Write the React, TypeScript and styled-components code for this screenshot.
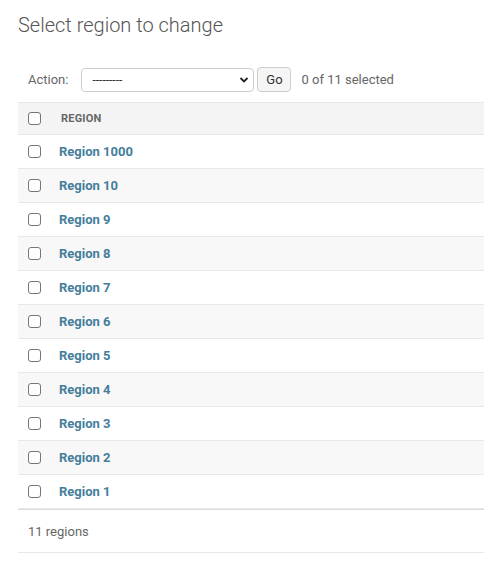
import React from 'react';
import styled, { createGlobalStyle } from 'styled-components';

const GlobalStyle = createGlobalStyle`
  body {
    margin: 0;
    background: #fff;
    font-family: Roboto, "Liberation Sans", Arial, sans-serif;
    font-size: 13px;
    color: #333;
  }
`;

const Content = styled.div`
  padding: 13px 0 0 18px;
`;

const Title = styled.h1`
  margin: 0;
  font-size: 20px;
  line-height: 24px;
  font-weight: 300;
  color: #555;
`;

const Actions = styled.div`
  display: flex;
  align-items: center;
  margin-top: 30px;
  margin-bottom: 10px;
  padding-left: 10px;
  height: 25px;
  color: #666;
`;

const ActionLabel = styled.label`
  font-size: 13px;
  margin-right: 13px;
`;

const SelectWrap = styled.div`
  position: relative;
  width: 173px;
  height: 24px;
`;

const Select = styled.select`
  appearance: none;
  width: 100%;
  height: 100%;
  box-sizing: border-box;
  border: 1px solid #ccc;
  border-radius: 4px;
  background: #fff;
  padding: 0 10px;
  font-family: inherit;
  font-size: 12px;
  color: #333;
`;

const Chevron = styled.svg`
  position: absolute;
  right: 5px;
  top: 8px;
  pointer-events: none;
`;

const GoButton = styled.button`
  margin-left: 3px;
  width: 34px;
  height: 25px;
  box-sizing: border-box;
  border: 1px solid #ccc;
  border-radius: 4px;
  background: #f5f5f5;
  font-family: inherit;
  font-size: 13px;
  color: #333;
  padding: 0;
`;

const Counter = styled.span`
  margin-left: 10px;
  font-size: 13px;
  color: #666;
`;

const Table = styled.table`
  width: 100%;
  border-collapse: collapse;
  border-top: 1px solid #e8e8e8;
`;

const HeadRow = styled.tr`
  background: #f4f4f4;
  height: 32px;
  border-bottom: 1px solid #e8e8e8;
`;

const Row = styled.tr<{ $alt: boolean }>`
  background: ${p => (p.$alt ? '#f8f8f8' : '#fff')};
  height: 34px;
  border-bottom: 1px solid #e8e8e8;
`;

const CheckCell = styled.td`
  width: 13px;
  padding: 0 18px 0 10px;
  vertical-align: middle;
`;

const HeadCheckCell = styled(CheckCell)`
  padding-bottom: 1px;
`;

const HeadCell = styled.th`
  text-align: left;
  padding: 0 0 0 2px;
  font-size: 11px;
  font-weight: 700;
  text-transform: uppercase;
  color: #666;
  letter-spacing: 0.2px;
`;

const Cell = styled.td`
  padding: 0;
  vertical-align: middle;
`;

const Box = styled.input`
  appearance: none;
  display: block;
  margin: 0;
  width: 13px;
  height: 13px;
  box-sizing: border-box;
  border: 1px solid #767676;
  border-radius: 3px;
  background: #fff;
`;

const RegionLink = styled.a`
  color: #447e9b;
  font-weight: 700;
  font-size: 13px;
  text-decoration: none;
`;

const Footer = styled.div`
  border-top: 1px solid #ddd;
  border-bottom: 1px solid #e8e8e8;
  height: 42px;
  display: flex;
  align-items: center;
  padding-left: 10px;
  color: #666;
  font-size: 13px;
`;

const regions = [1000, 10, 9, 8, 7, 6, 5, 4, 3, 2, 1];

export default function App() {
  return (
    <>
      <GlobalStyle />
      <Content>
        <Title>Select region to change</Title>
        <Actions>
          <ActionLabel>Action:</ActionLabel>
          <SelectWrap>
            <Select defaultValue="">
              <option value="">---------</option>
              <option value="delete">Delete selected regions</option>
            </Select>
            <Chevron width="10" height="8" viewBox="0 0 10 8">
              <path d="M1.5 2 L5 5.5 L8.5 2" fill="none" stroke="#222" strokeWidth="1.8" />
            </Chevron>
          </SelectWrap>
          <GoButton>Go</GoButton>
          <Counter>0 of 11 selected</Counter>
        </Actions>
        <Table>
          <thead>
            <HeadRow>
              <HeadCheckCell as="th">
                <Box type="checkbox" />
              </HeadCheckCell>
              <HeadCell>Region</HeadCell>
            </HeadRow>
          </thead>
          <tbody>
            {regions.map((n, i) => (
              <Row key={n} $alt={i % 2 === 1}>
                <CheckCell>
                  <Box type="checkbox" />
                </CheckCell>
                <Cell>
                  <RegionLink href="#">Region {n}</RegionLink>
                </Cell>
              </Row>
            ))}
          </tbody>
        </Table>
        <Footer>11 regions</Footer>
      </Content>
    </>
  );
}
